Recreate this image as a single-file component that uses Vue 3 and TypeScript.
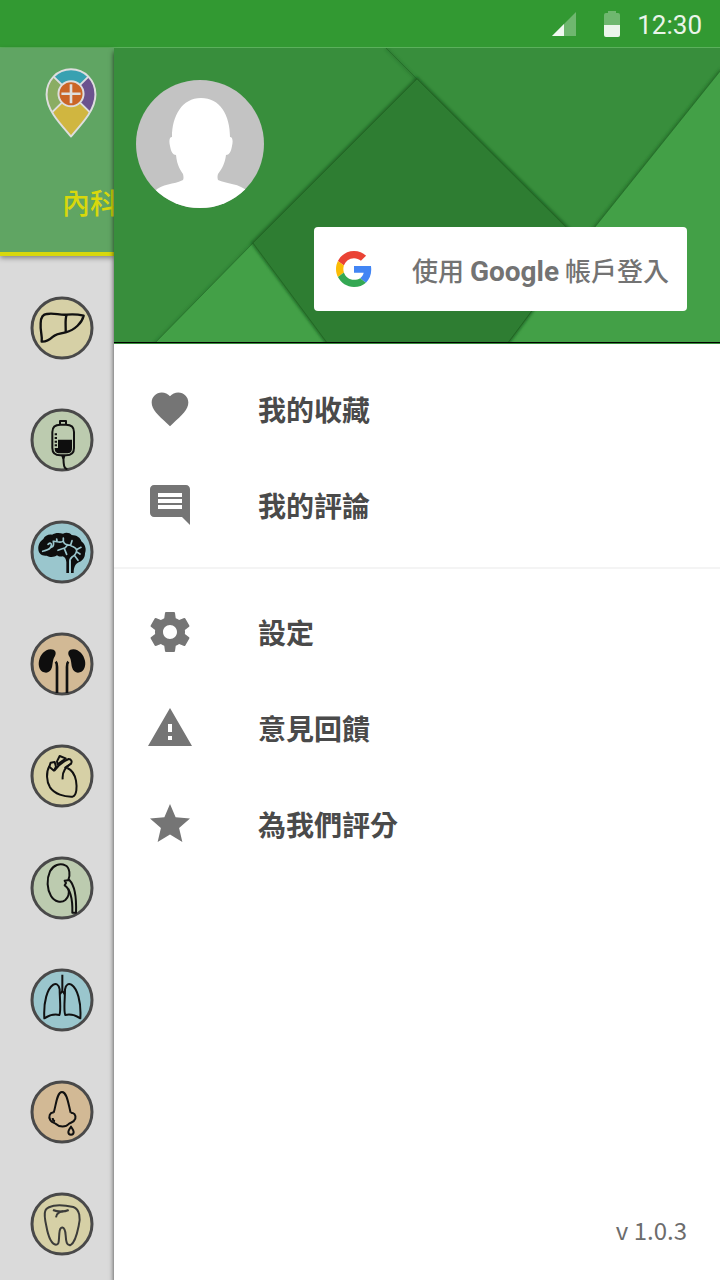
<script setup lang="ts">
interface Organ {
  name: string
  fill: string
  line: string[]
  solid?: string[]
  detail?: string[]
  width: number
  tone?: string
}

interface MenuItem {
  label: string
  path: string
  size: number
}

const beige = '#d6d0a6'
const sage = '#bccbaf'
const aqua = '#9ac6cd'
const tan = '#d2b995'

const organs: Organ[] = [
  {
    name: '肝臟', fill: beige, width: 7,
    line: [
      'M65 167 C68 150 60 138 62 112 C62 94 70 83 82 84 C100 80 120 88 140 86 C160 84 178 86 191 89 C186 110 165 132 137 139 C120 142 106 145 99 152 C88 162 78 168 65 167z',
      'M140 86 C134 100 138 120 137 139',
    ],
  },
  {
    name: '血液', fill: sage, width: 6,
    line: [
      'M121 80 H138 C154 80 162 88 162 102 V150 C162 164 154 172 138 172 H121 C105 172 97 164 97 150 V102 C97 88 105 80 121 80z',
      'M120 79 V69 H138 V79',
      'M130 176 C131 196 130 212 142 213',
      'M104 109 H111 M104 120 H111 M104 131 H111 M104 142 H111',
    ],
    solid: [
      'M114 125 H156 V150 C156 162 150 166 140 166 H119 C108 166 104 160 104 150 H114z',
      'M123 172 H137 L133 182 H127z',
    ],
  },
  {
    name: '腦', fill: aqua, width: 3,
    line: [],
    solid: [
      'M55 118 C54 104 60 94 70 87 C74 77 86 72 96 74 C106 67 120 68 129 71 C139 66 150 69 155 75 C170 75 182 84 184 94 C196 103 200 118 195 130 C195 144 187 153 176 157 C166 162 161 172 161 189 H153 V151 C149 151 147 153 147 158 V189 H139 V156 C138 146 134 141 128 139 C120 141 115 139 111 136 C103 142 90 143 80 137 C66 139 56 131 55 118z',
    ],
    detail: [
      'M68 124 C80 120 92 120 94 106 C95 98 90 98 84 103 M94 112 C100 110 102 104 100 94 C110 92 120 102 130 93 V84 M130 94 C134 106 144 106 152 105 L156 92 M143 104 L136 113 L114 121 M133 116 L140 133 M151 106 C160 112 168 112 170 120 C170 130 164 136 156 141 C150 146 148 150 150 158 M169 119 L183 112 M169 125 L180 132 M163 136 L174 151 M111 93 L110 87',
    ],
  },
  {
    name: '腎臟', fill: tan, width: 8,
    line: ['M107 119 C112 124 111 130 111 138 V213', 'M145 119 C140 124 141 130 141 138 V213'],
    solid: [
      'M92 82 C106 82 110 92 105 102 C98 112 99 122 96 136 C92 150 82 154 72 151 C59 146 54 132 57 116 C61 98 74 83 92 82z',
      'M160 82 C146 82 142 92 147 102 C154 112 153 122 156 136 C160 150 170 154 180 151 C193 146 198 132 195 116 C191 98 178 83 160 82z',
    ],
  },
  {
    name: '心臟', fill: beige, width: 6,
    line: [
      'M88 97 C78 114 79 142 90 160 C104 180 132 189 158 188 C171 184 171 158 168 140 C164 120 156 108 142 102',
      'M88 98 L92 86 L104 84 L108 98 L102 110 L88 98z',
      'M113 92 L111 82 L119 66 L137 73 C130 80 120 84 113 92z',
      'M103 110 C112 98 124 84 146 75 C154 75 157 83 153 89 C138 98 126 112 128 136',
      'M134 102 C142 94 148 94 153 89',
    ],
  },
  {
    name: '泌尿', fill: sage, width: 6,
    line: [
      'M145 102 C151 90 150 64 136 58 C120 50 100 57 90 76 C79 100 81 130 93 150 C104 168 124 172 136 162 C146 152 149 142 145 128',
      'M134 104 L148 102 C164 118 170 146 168 200 H157 C158 164 152 130 134 118 L138 111z',
    ],
  },
  {
    name: '肺', fill: aqua, width: 6,
    line: [
      'M119 94 C116 78 108 76 100 80 C82 92 70 130 73 181 C90 170 104 168 118 171 C124 160 119 124 119 94z',
      'M135 94 C138 78 146 76 154 80 C172 92 184 130 181 181 C164 170 150 168 136 171 C130 160 135 124 135 94z',
      'M127 50 V100 M127 98 L120 109 M127 98 L134 109',
    ],
  },
  {
    name: '鼻', fill: tan, width: 6,
    line: [
      'M101 128 C108 108 110 66 126 66 C142 66 146 108 152 128',
      'M101 128 C90 126 84 140 91 151 C96 159 104 158 108 162 C118 172 138 172 146 162 C152 157 162 158 166 146 C168 134 162 128 152 128',
      'M98 144 C98 150 100 153 105 154',
      'M153 170 C148 178 145 181 145 186 A8 8 0 0 0 161 186 C161 181 158 178 153 170z',
    ],
  },
  {
    name: '牙齒', fill: beige, width: 6, tone: '#3c3c3a',
    line: [
      'M76 86 C80 74 92 75 102 71 C122 68 142 71 160 75 C180 82 182 110 176 132 C172 152 164 182 152 189 C140 192 138 178 137 160 C135 130 119 130 118 154 C116 178 118 188 108 188 C94 186 84 160 79 132 C74 110 72 96 76 86z',
      'M99 84 C112 90 134 90 146 84',
      'M130 88 C114 90 109 96 108 106',
    ],
  },
]

const groups: MenuItem[][] = [
  [
    {
      label: '我的收藏', size: 44,
      path: 'M12 21.35l-1.45-1.32C5.4 15.36 2 12.28 2 8.5 2 5.42 4.42 3 7.5 3c1.74 0 3.41.81 4.5 2.09C13.09 3.81 14.76 3 16.5 3 19.58 3 22 5.42 22 8.5c0 3.78-3.4 6.86-8.55 11.54L12 21.35z',
    },
    {
      label: '我的評論', size: 48,
      path: 'M21.99 4c0-1.1-.89-2-1.99-2H4c-1.1 0-2 .9-2 2v12c0 1.1.9 2 2 2h14l4 4-.01-18zM18 14H6v-2h12v2zm0-3H6V9h12v2zm0-3H6V6h12v2z',
    },
  ],
  [
    {
      label: '設定', size: 48,
      path: 'M19.43 12.98c.04-.32.07-.64.07-.98s-.03-.66-.07-.98l2.11-1.65c.19-.15.24-.42.12-.64l-2-3.46c-.12-.22-.39-.3-.61-.22l-2.49 1c-.52-.4-1.08-.73-1.69-.98l-.38-2.65C14.46 2.18 14.25 2 14 2h-4c-.25 0-.46.18-.49.42l-.38 2.65c-.61.25-1.17.59-1.69.98l-2.49-1c-.23-.09-.49 0-.61.22l-2 3.46c-.13.22-.07.49.12.64l2.11 1.65c-.04.32-.07.65-.07.98s.03.66.07.98l-2.11 1.65c-.19.15-.24.42-.12.64l2 3.46c.12.22.39.3.61.22l2.49-1c.52.4 1.08.73 1.69.98l.38 2.65c.03.24.24.42.49.42h4c.25 0 .46-.18.49-.42l.38-2.65c.61-.25 1.17-.59 1.69-.98l2.49 1c.23.09.49 0 .61-.22l2-3.46c.12-.22.07-.49-.12-.64l-2.11-1.65zM12 15.5c-1.93 0-3.5-1.57-3.5-3.5s1.57-3.5 3.5-3.5 3.5 1.57 3.5 3.5-1.57 3.5-3.5 3.5z',
    },
    { label: '意見回饋', size: 48, path: 'M1 21h22L12 2 1 21zm12-3h-2v-2h2v2zm0-4h-2v-4h2v4z' },
    {
      label: '為我們評分', size: 48,
      path: 'M12 17.27L18.18 21l-1.64-7.03L22 9.24l-7.19-.61L12 2 9.19 8.63 2 9.24l5.46 4.73L5.82 21z',
    },
  ],
]
</script>

<template>
  <div class="app">
    <header class="status">
      <svg class="signal" viewBox="0 0 24 24" aria-hidden="true">
        <path d="M24 0V24H0z" fill="#fff" opacity=".3" />
        <path d="M12 12V24H0z" fill="#fff" opacity=".9" />
      </svg>
      <svg class="battery" viewBox="0 0 16 26" aria-hidden="true">
        <path d="M4 0H12V2H14Q16 2 16 4V14H0V4Q0 2 2 2H4z" fill="#fff" opacity=".3" />
        <path d="M0 14H16V24Q16 26 14 26H2Q0 26 0 24z" fill="#fff" opacity=".9" />
      </svg>
      <time>12:30</time>
    </header>

    <div class="body">
      <aside class="rail">
        <div class="rail-head">
          <svg class="pin" viewBox="0 0 156 212" aria-hidden="true">
            <path d="M78 78 L25 26 A74 74 0 0 1 130 26z" fill="#38a1b1" />
            <path d="M78 78 L130 26 C158 52 158 98 134 132z" fill="#6b528e" />
            <path d="M78 78 L25 26 C-2 52 -2 98 22 132z" fill="#8aad63" />
            <path d="M78 78 L22 132 C38 160 60 186 78 208 C96 186 118 160 134 132z" fill="#d0b640" />
            <path d="M26 27 L134 133 M130 27 L22 133" stroke="#dedede" stroke-width="6" />
            <circle cx="78" cy="78" r="38" fill="#cb6526" stroke="#dedede" stroke-width="6" />
            <path d="M78 49V107M49 78H107" stroke="#dedede" stroke-width="8" />
            <path d="M78 4 C36 4 4 38 4 80 C4 126 44 168 78 207 C112 168 152 126 152 80 C152 38 120 4 78 4z" fill="none" stroke="#dedede" stroke-width="6" />
          </svg>
          <a class="tab" href="#internal">內科</a>
        </div>
        <div class="organs">
          <button v-for="o in organs" :key="o.name" class="organ" type="button" :aria-label="o.name">
            <svg viewBox="30 30 192 192" aria-hidden="true">
              <circle cx="126" cy="126" r="90" :fill="o.fill" stroke="#494949" stroke-width="9" />
              <path v-for="d in o.solid ?? []" :key="d" :d="d" fill="#0e0e0e" />
              <path
                v-for="d in o.line" :key="d" :d="d" fill="none" :stroke="o.tone ?? '#111'"
                :stroke-width="o.width" stroke-linejoin="round"
              />
              <path v-for="d in o.detail ?? []" :key="d" :d="d" fill="none" :stroke="o.fill" stroke-width="5" stroke-linecap="round" />
            </svg>
          </button>
        </div>
      </aside>

      <main class="drawer">
        <section class="hero">
          <svg class="pattern" viewBox="0 0 606 294" preserveAspectRatio="xMidYMid slice" aria-hidden="true">
            <defs>
              <filter id="edge" x="-10%" y="-10%" width="120%" height="120%">
                <feGaussianBlur stdDeviation="1.5" />
              </filter>
            </defs>
            <rect width="606" height="294" fill="#388e3c" />
            <path d="M272 0 L303 32" stroke="#1b5e20" stroke-width="2" opacity=".5" filter="url(#edge)" />
            <path d="M139 195 L40 296" stroke="#1b5e20" stroke-width="2" opacity=".5" filter="url(#edge)" />
            <path d="M607 22 L481 179 L393 296" fill="none" stroke="#1b5e20" stroke-width="3" opacity=".7" filter="url(#edge)" />
            <path d="M139 195 L214 296 H40z M607 22 V296 H393 L481 179z" fill="#43a047" />
            <path d="M303 31 L139 195 L214 296 H393 L468 195z" fill="none" stroke="#0d4712" stroke-width="3" opacity=".7" filter="url(#edge)" />
            <path d="M303 31 L139 195 L214 296 H393 L468 195z" fill="#2e7d32" />
            <path d="M272 0 L303 31 L139 195 L214 296 M303 31 L468 195 M139 195 L40 296 M393 296 L481 179 L607 22" fill="none" stroke="#1b5e20" stroke-width="1" opacity=".5" />
          </svg>
          <svg class="avatar" viewBox="0 0 128 128" role="img" aria-label="avatar">
            <defs><clipPath id="round"><circle cx="64" cy="64" r="64" /></clipPath></defs>
            <g clip-path="url(#round)">
              <rect width="128" height="128" fill="#c3c3c3" />
              <path d="M65 18 C46 18 36 36 36 57 C33 57 33 62 34 66 C35 72 37 75 40 75 C41 86 45 91 47 94 Q48 98 47 100 C38 105 26 103 18 112 V130 H112 V112 C104 103 90 104 82 100 Q81 97 82 94 C86 89 89 83 90 75 C93 75 95 72 96 66 C97 62 97 57 94 57 C94 35 84 18 65 18z" fill="#fff" />
            </g>
          </svg>
          <button class="google" type="button">
            <svg class="g-logo" viewBox="0 0 48 48" aria-hidden="true">
              <path fill="#ea4335" d="M24 9.5c3.54 0 6.71 1.22 9.21 3.6l6.85-6.85C35.9 2.38 30.47 0 24 0 14.62 0 6.51 5.38 2.56 13.22l7.98 6.19C12.43 13.72 17.74 9.5 24 9.5z" />
              <path fill="#4285f4" d="M46.98 24.55c0-1.57-.15-3.09-.38-4.55H24v9.02h12.94c-.58 2.96-2.26 5.48-4.78 7.18l7.73 6c4.51-4.18 7.09-10.36 7.09-17.65z" />
              <path fill="#fbbc05" d="M10.53 28.59c-.48-1.45-.76-2.99-.76-4.59s.27-3.14.76-4.59l-7.98-6.19C.92 16.46 0 20.12 0 24c0 3.88.92 7.54 2.56 10.78l7.97-6.19z" />
              <path fill="#34a853" d="M24 48c6.48 0 11.93-2.13 15.89-5.81l-7.73-6c-2.15 1.45-4.92 2.3-8.16 2.3-6.26 0-11.57-4.22-13.47-9.91l-7.98 6.19C6.51 42.62 14.62 48 24 48z" />
            </svg>
            <span class="g-label">使用 <b>Google</b> 帳戶登入</span>
          </button>
        </section>

        <nav class="menu">
          <ul v-for="(g, i) in groups" :key="i">
            <li v-for="m in g" :key="m.label">
              <a href="#menu">
                <span class="icon">
                  <svg :width="m.size" :height="m.size" viewBox="0 0 24 24" aria-hidden="true"><path :d="m.path" /></svg>
                </span>
                {{ m.label }}
              </a>
            </li>
          </ul>
        </nav>
        <footer class="version">v 1.0.3</footer>
      </main>
    </div>
  </div>
</template>

<style>
body {
  margin: 0;
}
</style>

<style scoped>
.app {
  display: flex;
  flex-direction: column;
  min-height: 100vh;
  overflow: hidden;
  background: #dadada;
  font-family: "Noto Sans CJK TC", "Noto Sans", sans-serif;
}
.status {
  display: flex;
  align-items: center;
  justify-content: flex-end;
  box-sizing: border-box;
  height: 48px;
  padding: 0 18px 0 0;
  border-bottom: 1px solid #5bb05c;
  background: #329932;
}
.signal {
  width: 24px;
  height: 24px;
  margin-right: 28px;
}
.battery {
  width: 16px;
  height: 26px;
  margin-right: 17px;
}
.status time {
  padding-top: 2px;
  color: #eaf5ea;
  font: 400 26px/32px Roboto, sans-serif;
}
.body {
  display: flex;
  flex: 1;
}
.rail {
  flex: 0 0 114px;
  min-width: 0;
}
.rail-head {
  display: flex;
  flex-direction: column;
  align-items: flex-start;
  box-sizing: border-box;
  height: 208px;
  padding-top: 20px;
  border-bottom: 4px solid #d8d80c;
  background: #60a563;
  box-shadow: 0 2px 5px rgba(0, 0, 0, 0.4);
}
.pin {
  width: 52px;
  height: 70px;
  margin-left: 45px;
}
.tab {
  margin: 44px 0 0 62px;
  color: #d8d80c;
  font-size: 28px;
  font-weight: 500;
  line-height: 40px;
  white-space: nowrap;
  text-decoration: none;
}
.organs {
  display: flex;
  flex-direction: column;
  gap: 48px;
  padding: 40px 0 24px 30px;
}
.organ {
  width: 64px;
  height: 64px;
  padding: 0;
  border: 0;
  border-radius: 50%;
  background: none;
}
.organ svg {
  display: block;
  width: 100%;
  height: 100%;
}
.drawer {
  position: relative;
  display: flex;
  flex: 1;
  flex-direction: column;
  min-width: 0;
  background: #fff;
  box-shadow: 0 4px 5px rgba(0, 0, 0, 0.7);
  clip-path: inset(0 0 0 -20px);
}
.hero {
  position: relative;
  display: flex;
  flex-direction: column;
  gap: 19px;
  padding: 32px 33px 31px 22px;
  border-bottom: 1px solid #000;
  box-shadow: 0 1px 0 #388e3c;
}
.pattern {
  position: absolute;
  inset: 0;
  width: 100%;
  height: 100%;
}
.avatar {
  position: relative;
  width: 128px;
  height: 128px;
}
.google {
  position: relative;
  display: flex;
  align-items: center;
  align-self: flex-end;
  gap: 40px;
  height: 84px;
  padding: 0 18px 0 22px;
  border: 0;
  border-radius: 4px;
  background: #fff;
  color: #737373;
  font: 500 26px/36px "Noto Sans CJK TC", sans-serif;
  white-space: nowrap;
}
.g-label {
  padding-top: 4px;
}
.google b {
  font: 700 28px/36px Roboto, sans-serif;
}
.g-logo {
  width: 36px;
  height: 36px;
}
.menu {
  flex: 1;
  padding-top: 1px;
}
.menu ul {
  margin: 0;
  padding: 17px 0 14px;
  list-style: none;
}
.menu ul + ul {
  padding-top: 15px;
  border-top: 2px solid #f4f4f4;
}
.menu a {
  display: flex;
  align-items: center;
  gap: 64px;
  height: 96px;
  padding-left: 32px;
  color: #4a4a4a;
  font-size: 28px;
  font-weight: 700;
  line-height: 40px;
  text-decoration: none;
}
.icon {
  display: flex;
  align-items: center;
  justify-content: center;
  width: 48px;
  height: 48px;
}
.icon svg {
  fill: #757575;
}
.version {
  padding: 0 33px 32px 0;
  color: #6c6c6c;
  font-size: 24px;
  line-height: 36px;
  text-align: right;
}
</style>
